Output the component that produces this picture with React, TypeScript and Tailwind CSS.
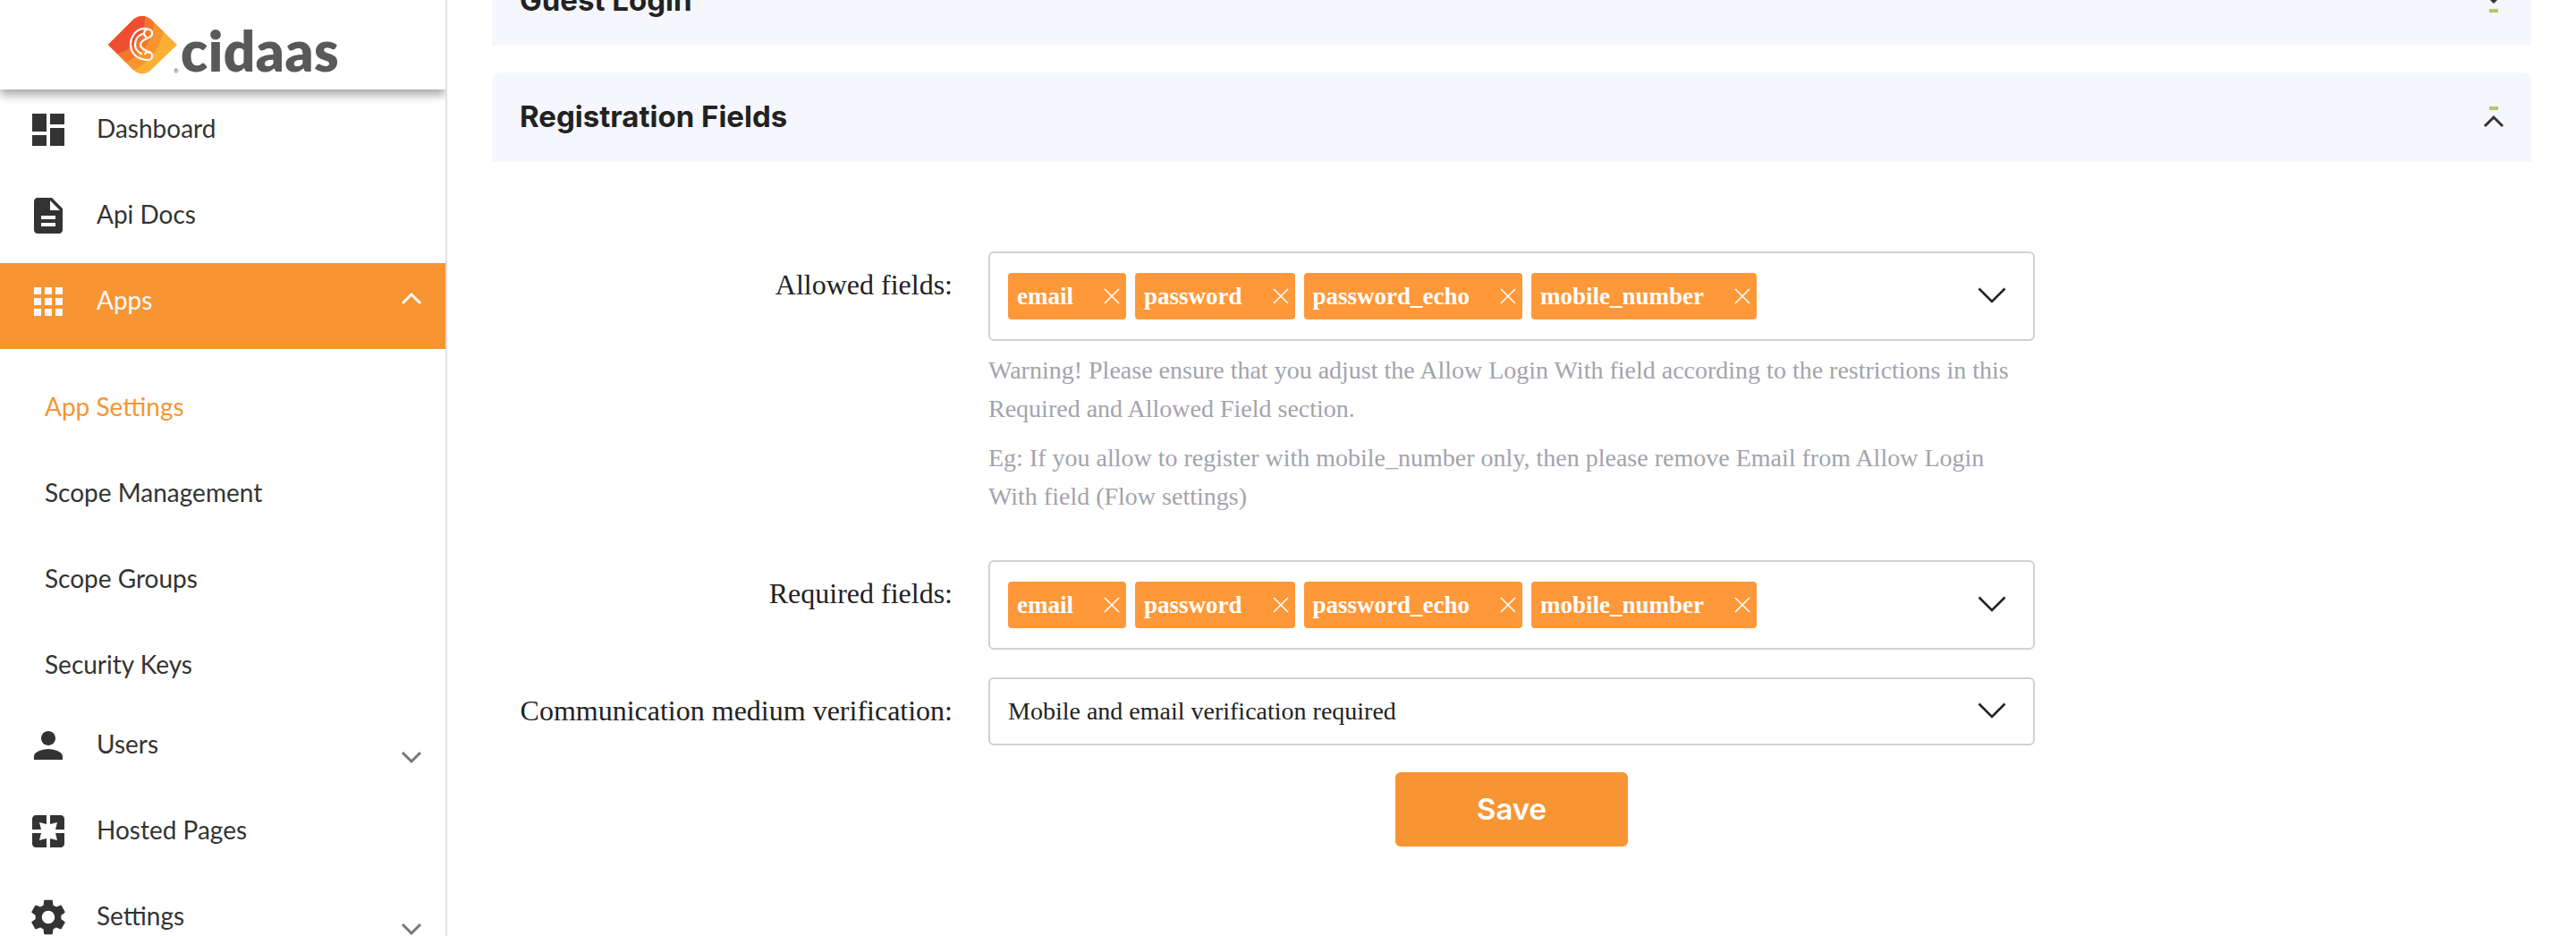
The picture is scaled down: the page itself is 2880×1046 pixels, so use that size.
import React from "react";

type NavItem = {
  label: string;
  path: string;
  chevron?: "up" | "down";
  active?: boolean;
};

const icons = {
  dashboard: "M3 13h8V3H3v10zm0 8h8v-6H3v6zm10 0h8V11h-8v10zm0-18v6h8V3h-8z",
  docs: "M14 2H6c-1.1 0-1.99.9-1.99 2L4 20c0 1.1.89 2 1.99 2H18c1.1 0 2-.9 2-2V8l-6-6zm2 16H8v-2h8v2zm0-4H8v-2h8v2zm-3-5V3.5L18.5 9H13z",
  apps: "M4 8h4V4H4v4zm6 12h4v-4h-4v4zm-6 0h4v-4H4v4zm0-6h4v-4H4v4zm6 0h4v-4h-4v4zm6-10v4h4V4h-4zm-6 4h4V4h-4v4zm6 6h4v-4h-4v4zm0 6h4v-4h-4v4z",
  person: "M12 12c2.21 0 4-1.79 4-4s-1.79-4-4-4-4 1.79-4 4 1.79 4 4 4zm0 2c-2.67 0-8 1.34-8 4v2h16v-2c0-2.66-5.33-4-8-4z",
  pages: "M3 5v6h5L7 7l4 1V3H5c-1.1 0-2 .9-2 2zm5 8H3v6c0 1.1.9 2 2 2h6v-5l-4 1 1-4zm9 4l-4-1v5h6c1.1 0 2-.9 2-2v-6h-5l1 4zm2-14h-6v5l4-1-1 4h5V5c0-1.1-.9-2-2-2z",
  settings: "M19.14 12.94c.04-.3.06-.61.06-.94 0-.32-.02-.64-.07-.94l2.03-1.58c.18-.14.23-.41.12-.61l-1.92-3.32c-.12-.22-.37-.29-.59-.22l-2.39.96c-.5-.38-1.03-.7-1.62-.94l-.36-2.54c-.04-.24-.24-.41-.48-.41h-3.84c-.24 0-.43.17-.47.41l-.36 2.54c-.59.24-1.13.57-1.62.94l-2.39-.96c-.22-.08-.47 0-.59.22L2.74 8.87c-.12.21-.08.47.12.61l2.03 1.58c-.05.3-.09.63-.09.94s.02.64.07.94l-2.03 1.58c-.18.14-.23.41-.12.61l1.92 3.32c.12.22.37.29.59.22l2.39-.96c.5.38 1.03.7 1.62.94l.36 2.54c.05.24.24.41.48.41h3.84c.24 0 .44-.17.47-.41l.36-2.54c.59-.24 1.13-.56 1.62-.94l2.39.96c.22.08.47 0 .59-.22l1.92-3.32c.12-.22.07-.47-.12-.61l-2.01-1.58zM12 15.6c-1.98 0-3.6-1.62-3.6-3.6s1.62-3.6 3.6-3.6 3.6 1.62 3.6 3.6-1.62 3.6-3.6 3.6z",
};

const topItems: NavItem[] = [
  { label: "Dashboard", path: icons.dashboard },
  { label: "Api Docs", path: icons.docs },
  { label: "Apps", path: icons.apps, chevron: "up", active: true },
];
const subItems = ["App Settings", "Scope Management", "Scope Groups", "Security Keys"];
const bottomItems: NavItem[] = [
  { label: "Users", path: icons.person, chevron: "down" },
  { label: "Hosted Pages", path: icons.pages },
  { label: "Settings", path: icons.settings, chevron: "down" },
];
const chips = ["email", "password", "password_echo", "mobile_number"];

const Logo = () => (
  <div className="flex items-start pt-[17px] pl-[120px]">
    <svg width="80" height="68" viewBox="0 0 80 68">
      <defs>
        <clipPath id="logo-diamond">
          <path d="M1 33 L29 5 Q39 -3 49 5 L78 33 L49 61 Q39 70 29 61 Z" />
        </clipPath>
      </defs>
      <g clipPath="url(#logo-diamond)">
        <rect width="80" height="68" fill="#fbb034" />
        <circle cx="2" cy="6" r="62" fill="#f7952f" />
        <circle cx="2" cy="6" r="50" fill="#f4772b" />
        <circle cx="2" cy="4" r="40" fill="#f04e30" />
      </g>
      <g fill="none" stroke="#fff" strokeWidth="2.2" strokeLinecap="round">
        <path d="M44 15 C33 14 26 23 26 33 C26 43 34 50 46 50 A4.5 4.5 0 1 0 42 43" />
        <path d="M43 24 A4.5 4.5 0 1 1 50 21 C50 26 37 26 37 33 C37 38 43 39 48 42" />
        <path d="M39 21 C34 23 31 27 31 33 C31 37 34 41 38 43" />
      </g>
      <text x="74" y="65" fontSize="7" fill="#555555">®</text>
    </svg>
    <span className="font-['Lato',sans-serif] font-extrabold text-[62px] leading-[58px] text-[#58595b] tracking-[0.5px] ml-[2px] mt-[10px]">
      cidaas
    </span>
  </div>
);

const Chevron = ({ dir, className }: { dir: "up" | "down"; className: string }) => (
  <svg width="24" height="16" viewBox="0 0 24 16" className={className}>
    <path
      d={dir === "up" ? "M2 13 L12 3 L22 13" : "M2 3 L12 13 L22 3"}
      fill="none"
      stroke="currentColor"
      strokeWidth="3"
    />
  </svg>
);

const SelectChevron = () => (
  <svg width="32" height="18" viewBox="0 0 32 18" className="shrink-0 ml-auto -mt-[3px] text-[#222222]">
    <path d="M1.5 1.5 L16 16 L30.5 1.5" fill="none" stroke="currentColor" strokeWidth="2.6" />
  </svg>
);

const NavRow = ({ item }: { item: NavItem }) => (
  <div
    className={
      item.active
        ? "flex items-center h-24 pl-[30px] pr-[26px] pb-[10px] bg-[#f79533] text-[#f7f8fd]"
        : "flex items-center h-24 pl-[30px] pr-[26px] pb-[10px] text-[#333333]"
    }
  >
    <svg width="48" height="48" viewBox="0 0 24 24" fill="currentColor" className="shrink-0">
      <path d={item.path} />
    </svg>
    <span className="ml-[30px] mb-[5px] text-[28px]">{item.label}</span>
    {item.chevron && (
      <Chevron
        dir={item.chevron}
        className={
          item.chevron === "up"
            ? "ml-auto -mt-[6px]"
            : "ml-auto mt-[26px] text-[#777777]"
        }
      />
    )}
  </div>
);

const Sidebar = () => (
  <aside className="w-[500px] shrink-0 h-full border-r-2 border-[#e0e0e0] font-['Lato',sans-serif] overflow-hidden">
    <header className="relative h-[100px] bg-white shadow-[0_6px_10px_rgba(0,0,0,0.35)]">
      <Logo />
    </header>
    <nav className="pt-[2px]">
      {topItems.map((item) => (
        <NavRow key={item.label} item={item} />
      ))}
      <ul className="pt-4">
        {subItems.map((label, i) => (
          <li
            key={label}
            className={
              i === 0
                ? "flex items-center h-24 pl-[50px] text-[28px] text-[#f79533]"
                : "flex items-center h-24 pl-[50px] text-[28px] text-[#333333]"
            }
          >
            {label}
          </li>
        ))}
      </ul>
      {bottomItems.map((item) => (
        <NavRow key={item.label} item={item} />
      ))}
    </nav>
  </aside>
);

const PanelMark = ({ up }: { up?: boolean }) => (
  <div className="flex flex-col items-center w-6 text-[#333333]">
    {up ? (
      <>
        <span className="w-[10px] h-1 bg-[#b5c866]" />
        <Chevron dir="up" className="mt-[5px]" />
      </>
    ) : (
      <>
        <Chevron dir="down" className="mb-[5px]" />
        <span className="w-[10px] h-1 bg-[#b5c866]" />
      </>
    )}
  </div>
);

const Panel = ({ title, up }: { title: string; up?: boolean }) => (
  <div className="flex items-center justify-between h-[100px] pl-[31px] pr-[30px] rounded-t-lg bg-[#f6f7fd]">
    <h2 className="font-['Inter',sans-serif] font-bold text-[33px] text-[#222222]">{title}</h2>
    <PanelMark up={up} />
  </div>
);

const X = () => (
  <svg width="18" height="18" viewBox="0 0 18 18" className="ml-auto shrink-0">
    <path d="M1 1 L17 17 M17 1 L1 17" stroke="#fff" strokeWidth="1.6" />
  </svg>
);

const ChipSelect = () => (
  <div className="flex items-center h-[100px] pl-5 pr-[30px] gap-[10px] border-2 border-[#d1d1d1] rounded-md">
    {chips.map((chip) => (
      <span
        key={chip}
        className="flex items-center gap-[34px] h-[52px] pl-[10px] pr-[7px] rounded bg-[#ff9838] text-white font-bold text-[27px]"
      >
        {chip}
        <X />
      </span>
    ))}
    <SelectChevron />
  </div>
);

const FormRow = ({ label, children }: { label: string; children: React.ReactNode }) => (
  <div className="grid grid-cols-[515px_1170px] gap-x-[40px]">
    <label className="text-right text-[32px] leading-[74px] text-[#222222]">{label}</label>
    <div>{children}</div>
  </div>
);

export default function App() {
  return (
    <div className="flex w-[2880px] h-[1046px] overflow-hidden bg-white">
      <Sidebar />
      <main className="flex-1 -mt-[49px] px-[50px] font-['Liberation_Serif',serif]">
        <Panel title="Guest Login" />
        <div className="mt-[30px]">
          <Panel title="Registration Fields" up />
        </div>
        <div className="mt-[100px]">
          <FormRow label="Allowed fields:">
            <ChipSelect />
            <p className="mt-[11px] text-[28px] leading-[43px] text-[#a3a3ad]">
              Warning! Please ensure that you adjust the Allow Login With field according to the restrictions in this Required and Allowed Field section.
            </p>
            <p className="mt-3 text-[28px] leading-[43px] text-[#a3a3ad]">
              Eg: If you allow to register with mobile_number only, then please remove Email from Allow Login With field (Flow settings)
            </p>
          </FormRow>
        </div>
        <div className="mt-[50px]">
          <FormRow label="Required fields:">
            <ChipSelect />
          </FormRow>
        </div>
        <div className="mt-[31px]">
          <FormRow label="Communication medium verification:">
            <div className="flex items-center h-[76px] pl-5 pr-[30px] border-2 border-[#d1d1d1] rounded-md text-[28px] text-[#222222]">
              Mobile and email verification required
              <SelectChevron />
            </div>
          </FormRow>
        </div>
        <div className="flex justify-center mt-[30px]">
          <button className="w-[260px] h-[83px] rounded-md bg-[#f79533] text-white text-[33px] font-semibold font-['Inter',sans-serif]">
            Save
          </button>
        </div>
      </main>
    </div>
  );
}
